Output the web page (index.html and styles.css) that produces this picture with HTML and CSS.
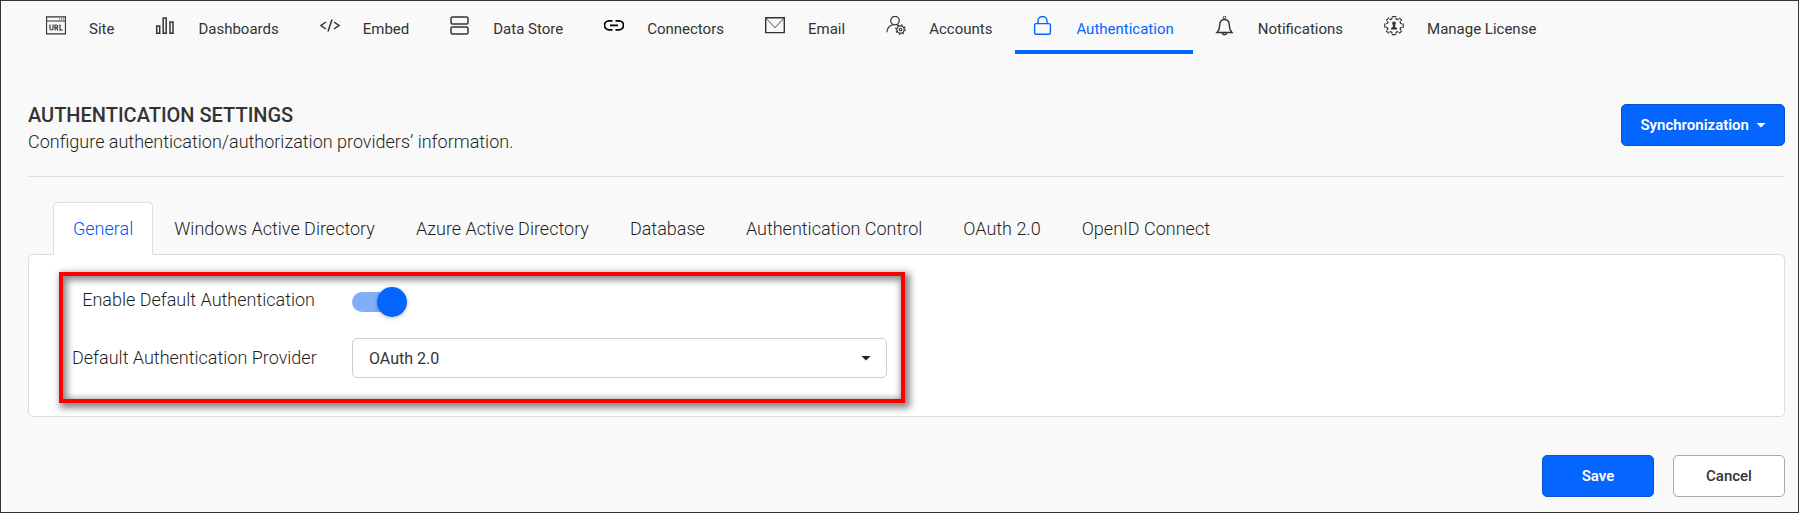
FILE: index.html
```html
<!DOCTYPE html>
<html lang="en">
<head>
<meta charset="utf-8">
<title>Authentication Settings</title>
<link rel="stylesheet" href="styles.css">
</head>
<body>
<div class="page">
  <nav class="nav">
    <a class="nav-link" href="#">
      <svg class="icon" viewBox="0 0 20 20"><path stroke-width="1.200" d="M.5 .8h19v17H.5zM.5 5h19" /><path d="M13 3h1M15 3h1M17 3h1"/><path stroke-width="1.200" d="M4 8.500v4q0 1.500 1.500 1.500t1.500-1.500v-4M9 14.500V9h1.300q1.500 0 1.500 1.300t-1.500 1.300H9M10.300 11.600l1.900 2.900M14 8.500v5.500h3"/></svg>
      <span class="nav-text">Site</span></a>
    <a class="nav-link" href="#">
      <svg class="icon" viewBox="0 0 20 20"><path stroke-width="1.500" d="M1.700 10h3v7.300h-3zM8.200 2h3v15.300h-3zM15 6h3v11.300h-3z"/></svg>
      <span class="nav-text">Dashboards</span></a>
    <a class="nav-link" href="#">
      <svg class="icon" viewBox="0 0 20 20"><path stroke-width="1.500" d="M6 6L1 9.500 6 13M14 6l5 3.500-5 3.500M12 3.500L8 15.500"/></svg>
      <span class="nav-text">Embed</span></a>
    <a class="nav-link" href="#">
      <svg class="icon" viewBox="0 0 20 20"><rect x="1" y="1" width="17" height="7" rx="1.500" stroke-width="1.500"/><rect x="1" y="11" width="17" height="7" rx="1.500" stroke-width="1.500"/></svg>
      <span class="nav-text">Data Store</span></a>
    <a class="nav-link" href="#">
      <svg class="icon icon-black" viewBox="0 0 20 20"><path stroke-width="1.700" d="M8.500 4.800H5a4.500 4.500 0 0 0 0 9h3.500M11.500 4.800H15a4.500 4.500 0 0 1 0 9h-3.500M6 9.300h8"/></svg>
      <span class="nav-text">Connectors</span></a>
    <a class="nav-link" href="#">
      <svg class="icon" viewBox="0 0 20 20"><path stroke-width="1.400" d="M.7 1.800h18.600v14.800H.7z"/><path stroke-width=".9" d="M1 2.200l9 9.500 9-9.500"/></svg>
      <span class="nav-text">Email</span></a>
    <a class="nav-link" href="#">
      <svg class="icon" viewBox="0 0 20 20"><circle cx="9" cy="4.600" r="4.300" stroke-width="1.200"/><path stroke-width="1.200" d="M1 16.300q.3-6.500 6.500-7.600M10.500 8.700l1.500.6"/><circle cx="14.500" cy="13.500" r="3.700" stroke-width="1.200"/><circle cx="14.500" cy="13.500" r="1.300" stroke-width="1.100"/><circle cx="14.500" cy="13.500" r="4.600" stroke-width="1.600" stroke-dasharray="1.400 2.213"/></svg>
      <span class="nav-text">Accounts</span></a>
    <a class="nav-link nav-active" href="#" aria-current="page">
      <svg class="icon" viewBox="0 0 20 20"><rect x="1.600" y="7.600" width="15.800" height="10.600" rx="1.500" stroke-width="1.400"/><path stroke-width="1.400" d="M5 7.500V5a4.500 4.500 0 0 1 9 0v2.500"/></svg>
      <span class="nav-text">Authentication</span></a>
    <a class="nav-link" href="#">
      <svg class="icon" viewBox="0 0 20 20"><circle cx="9.500" cy="1.500" r="1.300" stroke-width="1"/><path stroke-width="1.400" d="M2 16.500q2.600-2.400 2.600-6.500 0-6.500 4.900-6.500t4.900 6.500q0 4.100 2.600 6.500zM7.500 17q0 1.600 2 1.600t2-1.600"/></svg>
      <span class="nav-text">Notifications</span></a>
    <a class="nav-link" href="#">
      <svg class="icon" viewBox="0 0 20 20"><path stroke-width="1.200" stroke-dasharray="4 .7" d="M8.300.6h3.400l.5 2.400 1.300.6 2.100-1.400 1.900 1.900-1.400 2.100.6 1.300 2.500.5v3.200l-2.500.5-.6 1.300 1.400 2.100-1.900 1.900-2.100-1.400-1.300.6-.5 2.400H8.300l-.5-2.400-1.300-.6-2.100 1.400-1.900-1.900 1.400-2.100-.6-1.300L.8 11.200V8l2.500-.5.600-1.300-1.400-2.100 1.900-1.900 2.100 1.400 1.300-.6z"/><path fill="currentColor" stroke="none" d="M10 5.500a1.800 1.800 0 0 1 1.300 3.100l-.2 2.400 1.900 1v1.500H7V12l1.900-1-.2-2.400A1.800 1.800 0 0 1 10 5.500z"/></svg>
      <span class="nav-text">Manage License</span></a>
  </nav>

  <main class="content">
    <header class="header">
      <div>
        <h1 class="title">AUTHENTICATION SETTINGS</h1>
        <p class="subtitle">Configure authentication/authorization providers’ information.</p>
      </div>
      <button class="button button-primary button-menu" type="button">Synchronization <span class="caret"></span></button>
    </header>

    <div class="tabs" role="tablist">
      <button class="tab tab-active" type="button" role="tab" aria-selected="true">General</button>
      <button class="tab" type="button" role="tab">Windows Active Directory</button>
      <button class="tab" type="button" role="tab">Azure Active Directory</button>
      <button class="tab" type="button" role="tab">Database</button>
      <button class="tab" type="button" role="tab">Authentication Control</button>
      <button class="tab" type="button" role="tab">OAuth 2.0</button>
      <button class="tab" type="button" role="tab">OpenID Connect</button>
    </div>

    <section class="panel">
      <div class="highlight">
        <label class="label label-top" for="enable">Enable Default Authentication</label>
        <input class="switch" id="enable" type="checkbox" role="switch" checked>
        <label class="label" for="provider">Default Authentication Provider</label>
        <div class="select-box">
          <select class="select" id="provider"><option>OAuth 2.0</option></select>
          <span class="caret select-caret"></span>
        </div>
      </div>
    </section>

    <footer class="actions">
      <button class="button button-primary" type="button">Save</button>
      <button class="button button-plain" type="button">Cancel</button>
    </footer>
  </main>
</div>
</body>
</html>
```
FILE: styles.css
```css
* {
  box-sizing: border-box;
}

body {
  margin: 0;
  font-family: Roboto, "Liberation Sans", sans-serif;
  font-weight: 300;
  color: #1f1f1f;
  background: #f9f9f9;
}

button,
select {
  font-family: inherit;
  font-weight: inherit;
  color: inherit;
}

.page {
  min-height: 100vh;
  border: 1px solid #333;
}

.nav {
  display: flex;
  gap: 4px;
  padding-left: 27px;
}

.nav-link {
  display: flex;
  align-items: center;
  gap: 23px;
  height: 53px;
  padding: 0 19px 0 18px;
  border-bottom: 4px solid transparent;
  font-size: 15px;
  font-weight: 400;
  line-height: 20px;
  color: #333;
  text-decoration: none;
  white-space: nowrap;
}

.nav-active {
  color: #0565ff;
  border-color: #0565ff;
}

.nav-text {
  padding-top: 6px;
}

.icon {
  flex: none;
  width: 20px;
  height: 20px;
  fill: none;
  stroke: currentColor;
}

.icon-black {
  color: #000;
}

.content {
  padding: 50px 13px 15px 27px;
}

.header {
  display: flex;
  justify-content: space-between;
  align-items: flex-start;
  padding-bottom: 19px;
  border-bottom: 1px solid #ddd;
}

.title {
  margin: 0;
  font-size: 20px;
  font-weight: 500;
  line-height: 23px;
  color: #333;
}

.subtitle {
  margin: 0;
  font-size: 18px;
  line-height: 30px;
}

.button {
  min-width: 112px;
  height: 42px;
  padding: 0 18px;
  border: 1px solid #aaa;
  border-radius: 5px;
  font-size: 15px;
  font-weight: 500;
  color: #333;
}

.button-primary {
  color: #fff;
  background: #0565ff;
  border-color: #0654cf;
  font-weight: 600;
}

.button-menu {
  display: flex;
  align-items: center;
  gap: 7px;
}

.button-plain {
  background: #fff;
}

.caret {
  width: 10px;
  height: 5px;
  background: currentColor;
  clip-path: polygon(0 0, 100% 0, 50% 100%);
}

.tabs {
  display: flex;
  gap: 1px;
  margin-top: 25px;
  padding-left: 25px;
}

.tab {
  height: 53px;
  margin-bottom: -1px;
  padding: 0 19px;
  border: 1px solid transparent;
  border-radius: 5px 5px 0 0;
  background: none;
  font-size: 18px;
  white-space: nowrap;
}

.tab-active {
  z-index: 1;
  color: #0055ff;
  background: #fff;
  border-color: #ddd #ddd #fff;
}

.panel {
  padding: 17px 30px 13px;
  border: 1px solid #ddd;
  border-radius: 5px;
  background: #fff;
}

.highlight {
  display: grid;
  grid-template-columns: 243px 1fr;
  column-gap: 37px;
  row-gap: 21px;
  align-items: center;
  max-width: 846px;
  padding: 11px 14px 21px 9px;
  border: 4px solid #f00;
  box-shadow: 3px 3px 7px 2px #888, inset 2px 2px 7px 2px #888;
}

.label {
  font-size: 18px;
  line-height: 26px;
  text-align: right;
  white-space: nowrap;
}

.label-top {
  align-self: start;
}

.switch {
  display: grid;
  align-items: center;
  width: 55px;
  height: 30px;
  margin: 0;
  appearance: none;
}

.switch::before {
  content: "";
  grid-area: 1 / 1;
  width: 50px;
  height: 20px;
  border-radius: 10px;
  background: #82aef8;
}

.switch::after {
  content: "";
  grid-area: 1 / 1;
  justify-self: end;
  width: 30px;
  height: 30px;
  border-radius: 50%;
  background: #0565ff;
  box-shadow: 0 1px 4px #0004;
}

.select-box {
  display: grid;
  grid-template-columns: 1fr 10px 16px;
  align-items: center;
}

.select {
  grid-area: 1 / 1 / 2 / 4;
  height: 40px;
  padding: 0 16px;
  appearance: none;
  border: 1px solid #ccc;
  border-radius: 5px;
  background: #fff;
  font-size: 16px;
  font-weight: 400;
  color: #333;
}

.select-caret {
  grid-area: 1 / 2;
  pointer-events: none;
}

.actions {
  display: flex;
  justify-content: flex-end;
  gap: 19px;
  margin-top: 38px;
}
```
